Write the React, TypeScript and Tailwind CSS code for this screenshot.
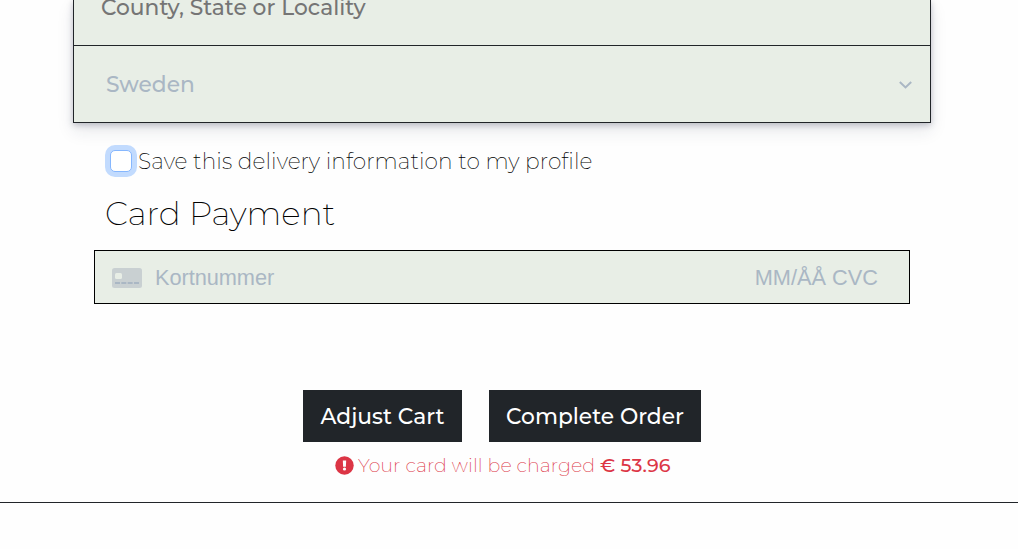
export default function App() {
  return (
    <main className="h-[549px] w-full overflow-hidden bg-[#fefefe] font-['Montserrat','Inter',sans-serif] text-black">
      <section className="ml-[73px] h-[123px] w-[858px] border border-t-0 border-[#212529] bg-[#e8eee6] shadow-[0_8px_16px_rgba(33,37,65,0.1),0_2px_6px_rgba(33,37,65,0.25)]">
        <div className="h-[46px] border-b border-[#212529] pl-[27px] text-[21.76px] leading-[15px] font-medium text-[#757575]">
          <span>County, State or Locality</span>
        </div>
        <div className="flex h-[76px] items-center justify-between pr-[18px] pl-8 text-[21.76px] font-medium text-[#aab7c4]">
          <span>Sweden</span>
          <svg width="13" height="8" viewBox="0 0 13 8" fill="none" stroke="#aab7c4" strokeWidth="2" className="mt-px">
            <path d="M.8 1 6.5 6.4 12.2 1" />
          </svg>
        </div>
      </section>

      <label className="mt-[22px] ml-[105px] flex h-8 items-center text-[21.76px] font-extralight">
        <span className="m-[5px] size-[22px] shrink-0 rounded-[5px] border border-[#86b7fe] bg-white shadow-[0_0_0_5px_#c2dbfe]" />
        <span className="ml-px whitespace-nowrap tracking-[0.07px]">Save this delivery information to my profile</span>
      </label>

      <h2 className="mt-[16px] ml-[105px] h-10 text-[32.64px] leading-10 font-extralight">
        <span>Card Payment</span>
      </h2>

      <div className="mt-[17px] ml-[94px] flex h-[54px] w-[816px] items-center border border-black bg-[#e8eee6] pr-[31px] pl-[17px] font-['Liberation_Sans',sans-serif] text-[21.76px] text-[#aab7c4]">
        <svg width="30" height="20" viewBox="0 0 30 20" className="mt-0.5">
          <rect width="30" height="20" rx="2.5" fill="#c9d0d2" />
          <rect x="3" y="5" width="7" height="6" rx="1.5" fill="#e8eee6" />
          <path d="M3 15h24" stroke="#aab7c4" strokeWidth="2" strokeDasharray="5 1.33" />
        </svg>
        <span className="mt-0.5 ml-[13px] tracking-[-0.05px]">Kortnummer</span>
        <span className="mt-0.5 ml-auto">MM/ÅÅ CVC</span>
      </div>

      <div className="mt-[86px] ml-[303px] flex h-[52px] gap-[27px] text-[21.76px] font-medium text-white">
        <button className="w-[159px] whitespace-nowrap bg-[#212529]"><span>Adjust Cart</span></button>
        <button className="w-[212px] whitespace-nowrap bg-[#212529]"><span>Complete Order</span></button>
      </div>

      <p className="mt-[8px] ml-[335px] flex h-[30px] items-center text-[19.04px] font-extralight whitespace-nowrap text-[#dc3545]">
        <svg width="19" height="19" viewBox="0 0 512 512" className="mr-1" fill="#dc3545">
          <circle cx="256" cy="256" r="248" />
          <path d="M211 118h90l-8 172h-74z" fill="#fefefe" />
          <circle cx="256" cy="350" r="43" fill="#fefefe" />
        </svg>
        <span className="mt-[3px] tracking-[0.05px]">Your card will be charged</span>
        <span className="mt-[3px] ml-[5px] font-medium tracking-[0.1px]">€ 53.96</span>
      </p>
      <div className="mt-[22px] border-t border-[#212529]" />
    </main>
  );
}
